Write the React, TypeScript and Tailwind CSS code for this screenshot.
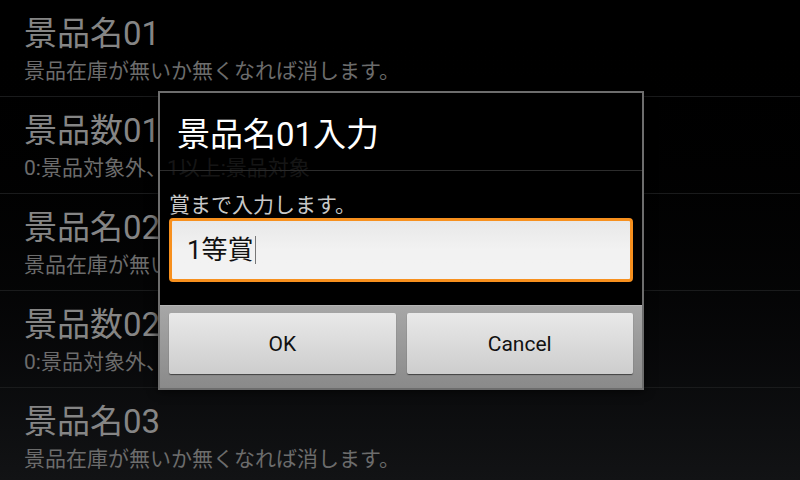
const rows = [
  { title: "景品名01", sub: "景品在庫が無いか無くなれば消します。" },
  { title: "景品数01", sub: "0:景品対象外、1以上:景品対象" },
  { title: "景品名02", sub: "景品在庫が無いか無くなれば消します。" },
  { title: "景品数02", sub: "0:景品対象外、1以上:景品対象" },
  { title: "景品名03", sub: "景品在庫が無いか無くなれば消します。" },
]

const font = "font-['Roboto','Noto_Sans_CJK_JP',sans-serif]"

function App() {
  return (
    <div className={`relative w-[800px] h-[480px] overflow-hidden bg-gradient-to-b from-black to-[#121315] ${font}`}>
      {/* settings list behind the dialog */}
      <div className="flex flex-col">
        {rows.map((row, i) => (
          <div key={i} className="h-[97px] shrink-0 border-b border-[#1a1b1c] pl-6 pt-[15px]">
            <div className="text-[33px] leading-[38px] text-[#858585]">{row.title}</div>
            <div className="text-[21px] leading-[36px] text-[#6c6c6c]">{row.sub}</div>
          </div>
        ))}
      </div>

      {/* input dialog */}
      <div className="absolute left-[158px] top-[91px] w-[486px] h-[299px] border-2 border-[#6d6d6d] flex flex-col shadow-[0_0_10px_rgba(0,0,0,0.8)]">
        {/* title; its lower strip lets the list text behind show faintly, as on the device */}
        <div className="shrink-0 flex flex-col border-b border-[#2c2c2c]">
          <div className="h-[61px] bg-black pl-[17px] pt-[22px] text-white text-[33px] leading-[40px]">
            景品名01入力
          </div>
          <div className="h-[16px] bg-black/80" />
        </div>
        <div className="h-[134px] shrink-0 flex flex-col">
          <div className="h-[7px] bg-black/80" />
          <div className="flex-1 bg-black px-[9px] pt-[15px]">
            <div className="text-[21px] leading-[24px] text-[#c8c8c8]">賞まで入力します。</div>
            <div className="mt-[1px] h-[64px] rounded-[4px] border-[3px] border-[#f7901e] bg-gradient-to-b from-[#e8e8e8] via-[#f2f2f2] to-[#f2f2f2] flex items-center pl-[15px]">
              <span className="text-[26px] text-[#111]">1等賞</span>
              <span className="w-px h-[28px] bg-[#777] ml-px" />
            </div>
          </div>
        </div>
        <div className="flex-1 bg-gradient-to-b from-[#a7a7a7] to-[#8a8a8a] border-t border-[#b5b5b5] px-[9px] pt-[7px] flex gap-[11px]">
          <button className="h-[61px] flex-1 rounded-[2px] bg-gradient-to-b from-[#e9e9e9] to-[#cdcdcd] shadow-[0_1px_1px_rgba(0,0,0,0.55)] pt-[3px] text-[21px] text-[#111]">
            OK
          </button>
          <button className="h-[61px] flex-1 rounded-[2px] bg-gradient-to-b from-[#e9e9e9] to-[#cdcdcd] shadow-[0_1px_1px_rgba(0,0,0,0.55)] pt-[3px] text-[21px] text-[#111]">
            Cancel
          </button>
        </div>
      </div>
    </div>
  )
}

export default App
